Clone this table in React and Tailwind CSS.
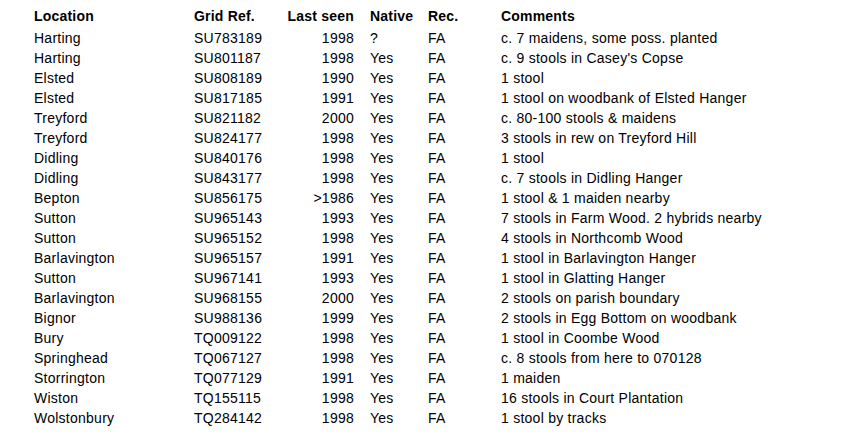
const rows = [
  ["Harting", "SU783189", "1998", "?", "FA", "c. 7 maidens, some poss. planted"],
  ["Harting", "SU801187", "1998", "Yes", "FA", "c. 9 stools in Casey's Copse"],
  ["Elsted", "SU808189", "1990", "Yes", "FA", "1 stool"],
  ["Elsted", "SU817185", "1991", "Yes", "FA", "1 stool on woodbank of Elsted Hanger"],
  ["Treyford", "SU821182", "2000", "Yes", "FA", "c. 80-100 stools & maidens"],
  ["Treyford", "SU824177", "1998", "Yes", "FA", "3 stools in rew on Treyford Hill"],
  ["Didling", "SU840176", "1998", "Yes", "FA", "1 stool"],
  ["Didling", "SU843177", "1998", "Yes", "FA", "c. 7 stools in Didling Hanger"],
  ["Bepton", "SU856175", ">1986", "Yes", "FA", "1 stool & 1 maiden nearby"],
  ["Sutton", "SU965143", "1993", "Yes", "FA", "7 stools in Farm Wood. 2 hybrids nearby"],
  ["Sutton", "SU965152", "1998", "Yes", "FA", "4 stools in Northcomb Wood"],
  ["Barlavington", "SU965157", "1991", "Yes", "FA", "1 stool in Barlavington Hanger"],
  ["Sutton", "SU967141", "1993", "Yes", "FA", "1 stool in Glatting Hanger"],
  ["Barlavington", "SU968155", "2000", "Yes", "FA", "2 stools on parish boundary"],
  ["Bignor", "SU988136", "1999", "Yes", "FA", "2 stools in Egg Bottom on woodbank"],
  ["Bury", "TQ009122", "1998", "Yes", "FA", "1 stool in Coombe Wood"],
  ["Springhead", "TQ067127", "1998", "Yes", "FA", "c. 8 stools from here to 070128"],
  ["Storrington", "TQ077129", "1991", "Yes", "FA", "1 maiden"],
  ["Wiston", "TQ155115", "1998", "Yes", "FA", "16 stools in Court Plantation"],
  ["Wolstonbury", "TQ284142", "1998", "Yes", "FA", "1 stool by tracks"],
];

function Row({ cells, head }) {
  const [loc, grid, seen, native, rec, comments] = cells;
  return (
    <div
      className={`grid grid-cols-[160px_100px_60px_74px_73px_1fr] leading-5 whitespace-nowrap ${
        head ? "h-[22px] font-bold tracking-[0.2px]" : "h-5 tracking-[0.25px]"
      }`}
    >
      <div>{loc}</div>
      <div>{grid}</div>
      <div className="flex justify-end">{seen}</div>
      <div className="pl-4">{native}</div>
      <div>{rec}</div>
      <div>{comments}</div>
    </div>
  );
}

export default function App() {
  return (
    <div className="w-[853px] h-[437px] bg-white text-black text-[14px] pl-[34px] pt-[6px] font-['Liberation_Sans',Arial,sans-serif]">
      <Row head cells={["Location", "Grid Ref.", "Last seen", "Native", "Rec.", "Comments"]} />
      {rows.map((r, i) => (
        <Row key={i} cells={r} />
      ))}
    </div>
  );
}
